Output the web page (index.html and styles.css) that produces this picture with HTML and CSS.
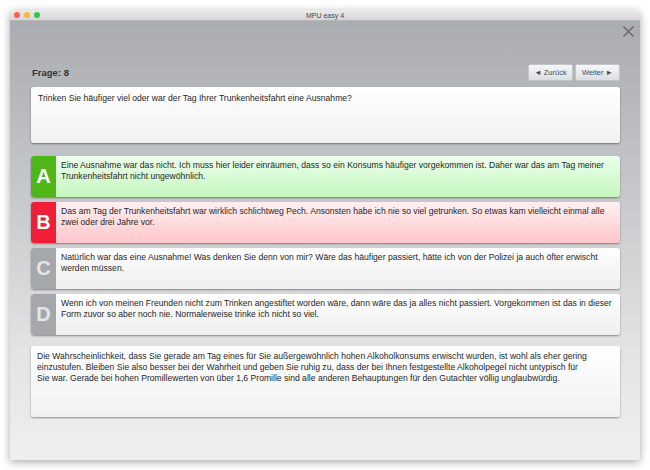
FILE: index.html
```html
<!DOCTYPE html>
<html lang="de">
<head>
  <meta charset="UTF-8" />
  <title>MPU easy 4</title>
  <link rel="stylesheet" href="styles.css">
</head>
<body>

  <!-- App window -->
  <div class="window">
    <div class="titlebar">
      <div class="lights">
        <span class="light red"></span>
        <span class="light yellow"></span>
        <span class="light green"></span>
      </div>
      <div class="title">MPU easy 4</div>
      <div></div>
    </div>

    <div class="main">
      <div class="close-row">
        <svg class="close" width="11" height="11" viewBox="0 0 11 11">
          <path d="M0.5 0.5 L10.5 10.5 M10.5 0.5 L0.5 10.5" stroke="#5d5f62" stroke-width="1.1" fill="none" />
        </svg>
      </div>

      <!-- Question header -->
      <div class="header">
        <div class="label">Frage: 8</div>
        <div class="nav">
          <button class="btn">&#9668; Zurück</button>
          <button class="btn">Weiter &#9658;</button>
        </div>
      </div>

      <div class="box question">Trinken Sie häufiger viel oder war der Tag Ihrer Trunkenheitsfahrt eine Ausnahme?</div>

      <!-- Answers -->
      <div class="answers">
        <div class="answer right">
          <div class="letter">A</div>
          <div class="text">Eine Ausnahme war das nicht. Ich muss hier leider einräumen, dass so ein Konsums häufiger vorgekommen ist. Daher war das am Tag meiner Trunkenheitsfahrt nicht ungewöhnlich.</div>
        </div>
        <div class="answer wrong">
          <div class="letter">B</div>
          <div class="text">Das am Tag der Trunkenheitsfahrt war wirklich schlichtweg Pech. Ansonsten habe ich nie so viel getrunken. So etwas kam vielleicht einmal alle zwei oder drei Jahre vor.</div>
        </div>
        <div class="answer">
          <div class="letter">C</div>
          <div class="text">Natürlich war das eine Ausnahme! Was denken Sie denn von mir? Wäre das häufiger passiert, hätte ich von der Polizei ja auch öfter erwischt werden müssen.</div>
        </div>
        <div class="answer">
          <div class="letter">D</div>
          <div class="text">Wenn ich von meinen Freunden nicht zum Trinken angestiftet worden wäre, dann wäre das ja alles nicht passiert. Vorgekommen ist das in dieser Form zuvor so aber noch nie. Normalerweise trinke ich nicht so viel.</div>
        </div>
      </div>

      <div class="box explain">Die Wahrscheinlichkeit, dass Sie gerade am Tag eines für Sie außergewöhnlich hohen Alkoholkonsums erwischt wurden, ist wohl als eher gering einzustufen. Bleiben Sie also besser bei der Wahrheit und geben Sie ruhig zu, dass der bei Ihnen festgestellte Alkoholpegel nicht untypisch für Sie war. Gerade bei hohen Promillewerten von über 1,6 Promille sind alle anderen Behauptungen für den Gutachter völlig unglaubwürdig.</div>
    </div>
  </div>

</body>
</html>
```

FILE: styles.css
```css
/* Basic reset */
* {
  margin: 0;
  padding: 0;
  box-sizing: border-box;
}

body {
  background: #fff;
  padding: 10px;
  font-family: 'Liberation Sans', Arial, sans-serif;
  color: #262626;
}

.window {
  width: 630px;
  height: 450px;
  display: flex;
  flex-direction: column;
  border-radius: 4px 4px 0 0;
  overflow: hidden;
  box-shadow: 0 2px 9px rgba(0, 0, 0, 0.35);
}

/* Title bar */
.titlebar {
  height: 11px;
  display: grid;
  grid-template-columns: 1fr auto 1fr;
  align-items: center;
  background: linear-gradient(#ecebec, #d7d5d7);
  border-bottom: 1px solid #b8b8ba;
}

.lights {
  display: flex;
  gap: 4px;
  padding-left: 4px;
}

.light {
  width: 6px;
  height: 6px;
  border-radius: 50%;
}

.red { background: #fc5f57; }
.yellow { background: #fdbc2e; }
.green { background: #33c748; }

.title {
  font-size: 7px;
  color: #4a4a4a;
}

/* Main area */
.main {
  flex: 1;
  padding: 0 20px 0 21px;
  background: linear-gradient(#a9acb0, #c3c5c8 35%, #e3e3e4 75%, #efefef);
}

.close-row {
  display: flex;
  justify-content: flex-end;
  padding-top: 5px;
  margin-right: -14px;
}

.close {
  display: block;
}

.header {
  margin-top: 27px;
  height: 17px;
  display: flex;
  justify-content: space-between;
  align-items: center;
}

.label {
  font-size: 9.5px;
  font-weight: bold;
  color: #333;
  padding-left: 1px;
}

.nav {
  display: flex;
  gap: 2px;
}

.btn {
  width: 45px;
  height: 17px;
  font-family: 'Liberation Sans', Arial, sans-serif;
  font-size: 7.5px;
  color: #4a4a4a;
  background: linear-gradient(#f6f7f8, #dcdfe2);
  border: 1px solid #c2c5c8;
  border-radius: 2px;
}

.box {
  background: linear-gradient(#ffffff, #f1f1f1);
  border-radius: 3px;
  box-shadow: 0 1px 2px rgba(0, 0, 0, 0.4);
  font-size: 8.6px;
  line-height: 11px;
}

.question {
  margin-top: 6px;
  height: 56px;
  padding: 6px 7px;
}

.answers {
  margin-top: 13px;
  display: flex;
  flex-direction: column;
  gap: 5px;
}

.answer {
  height: 41px;
  display: flex;
  border-radius: 3px;
  box-shadow: 0 1px 2px rgba(0, 0, 0, 0.4);
  background: linear-gradient(#ffffff, #eeeeee);
  overflow: hidden;
}

.answer .letter {
  width: 25px;
  flex-shrink: 0;
  display: flex;
  justify-content: center;
  align-items: center;
  font-size: 20px;
  font-weight: bold;
  color: #e4e6e8;
  background: #a5a8ab;
}

.answer .text {
  padding: 4px 5px 0 5px;
  font-size: 8.6px;
  line-height: 11px;
}

.answer.right {
  background: linear-gradient(#edffec, #c4f6be);
}

.answer.right .letter {
  background: #4fb61a;
  color: #fff;
}

.answer.wrong {
  background: linear-gradient(#fff0f1, #ffc6cb);
}

.answer.wrong .letter {
  background: #f01f37;
  color: #fff;
}

.explain {
  margin-top: 11px;
  height: 71px;
  padding: 5px 30px 5px 6px;
}
```
